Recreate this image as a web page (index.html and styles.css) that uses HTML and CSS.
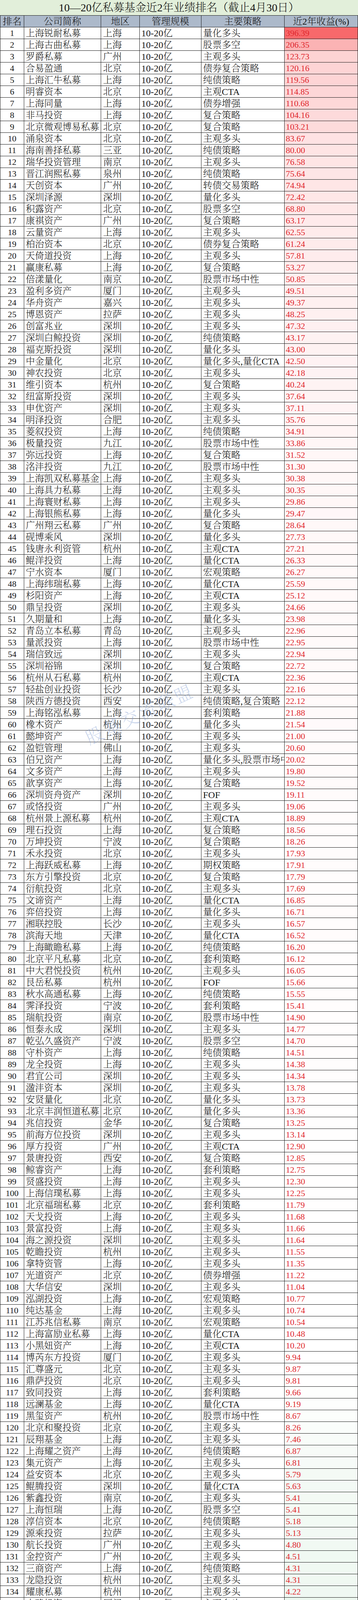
FILE: index.html
```html
<!DOCTYPE html>
<html lang="zh-CN">
<head>
<meta charset="utf-8">
<title>10—20亿私募基金近2年业绩排名</title>
<link rel="stylesheet" href="styles.css">
</head>
<body>
<div class="sheet">
<table class="rank-table">
<colgroup><col class="c-rk"><col class="c-nm"><col class="c-rg"><col class="c-sc"><col class="c-st"><col class="c-ret"></colgroup>
<thead>
<tr class="title-row"><th colspan="6">10—20亿私募基金近2年业绩排名（截止4月30日）</th></tr>
<tr class="head-row"><th>排名</th><th>公司简称</th><th>地区</th><th>管理规模</th><th>主要策略</th><th>近2年收益(%)</th></tr>
</thead>
<tbody>
<tr><td>1</td><td>上海锐耐私募</td><td>上海</td><td>10-20亿</td><td>量化多头</td><td class="up">396.39</td></tr>
<tr><td>2</td><td>上海古曲私募</td><td>上海</td><td>10-20亿</td><td>股票多空</td><td class="up">206.35</td></tr>
<tr><td>3</td><td>罗爵私募</td><td>广州</td><td>10-20亿</td><td>主观多头</td><td class="up">123.73</td></tr>
<tr><td>4</td><td>合易盈通</td><td>北京</td><td>10-20亿</td><td>债券复合策略</td><td class="up">120.16</td></tr>
<tr><td>5</td><td>上海汇牛私募</td><td>上海</td><td>10-20亿</td><td>纯债策略</td><td class="up">119.56</td></tr>
<tr><td>6</td><td>明睿资本</td><td>北京</td><td>10-20亿</td><td>主观CTA</td><td class="up">114.85</td></tr>
<tr><td>7</td><td>上海同量</td><td>上海</td><td>10-20亿</td><td>债券增强</td><td class="up">110.68</td></tr>
<tr><td>8</td><td>非马投资</td><td>上海</td><td>10-20亿</td><td>复合策略</td><td class="up">104.16</td></tr>
<tr><td>9</td><td>北京微观博易私募</td><td>北京</td><td>10-20亿</td><td>复合策略</td><td class="up">103.21</td></tr>
<tr><td>10</td><td>涌泉资本</td><td>北京</td><td>10-20亿</td><td>主观多头</td><td class="up">83.67</td></tr>
<tr><td>11</td><td>海南善择私募</td><td>三亚</td><td>10-20亿</td><td>纯债策略</td><td class="up">80.00</td></tr>
<tr><td>12</td><td>瑞华投资管理</td><td>南京</td><td>10-20亿</td><td>主观多头</td><td class="up">76.58</td></tr>
<tr><td>13</td><td>晋江润熙私募</td><td>泉州</td><td>10-20亿</td><td>纯债策略</td><td class="up">75.64</td></tr>
<tr><td>14</td><td>天创资本</td><td>广州</td><td>10-20亿</td><td>转债交易策略</td><td class="up">74.94</td></tr>
<tr><td>15</td><td>深圳泽源</td><td>深圳</td><td>10-20亿</td><td>量化多头</td><td class="up">72.42</td></tr>
<tr><td>16</td><td>积露资产</td><td>北京</td><td>10-20亿</td><td>股票多空</td><td class="up">68.80</td></tr>
<tr><td>17</td><td>康祺资产</td><td>广州</td><td>10-20亿</td><td>复合策略</td><td class="up">63.17</td></tr>
<tr><td>18</td><td>云量资产</td><td>上海</td><td>10-20亿</td><td>主观多头</td><td class="up">62.55</td></tr>
<tr><td>19</td><td>柏治资本</td><td>北京</td><td>10-20亿</td><td>债券复合策略</td><td class="up">61.24</td></tr>
<tr><td>20</td><td>天倚道投资</td><td>上海</td><td>10-20亿</td><td>主观多头</td><td class="up">57.81</td></tr>
<tr><td>21</td><td>赢康私募</td><td>上海</td><td>10-20亿</td><td>复合策略</td><td class="up">53.27</td></tr>
<tr><td>22</td><td>倍漾量化</td><td>南京</td><td>10-20亿</td><td>股票市场中性</td><td class="up">50.85</td></tr>
<tr><td>23</td><td>盈利多资产</td><td>厦门</td><td>10-20亿</td><td>主观多头</td><td class="up">49.51</td></tr>
<tr><td>24</td><td>华舟资产</td><td>嘉兴</td><td>10-20亿</td><td>主观多头</td><td class="up">49.37</td></tr>
<tr><td>25</td><td>博恩资产</td><td>拉萨</td><td>10-20亿</td><td>主观多头</td><td class="up">48.25</td></tr>
<tr><td>26</td><td>创富兆业</td><td>深圳</td><td>10-20亿</td><td>主观多头</td><td class="up">47.32</td></tr>
<tr><td>27</td><td>深圳白鲸投资</td><td>深圳</td><td>10-20亿</td><td>纯债策略</td><td class="up">43.17</td></tr>
<tr><td>28</td><td>福克斯投资</td><td>深圳</td><td>10-20亿</td><td>量化多头</td><td class="up">43.00</td></tr>
<tr><td>29</td><td>中金量化</td><td>北京</td><td>10-20亿</td><td>量化多头,量化CTA</td><td class="up">42.50</td></tr>
<tr><td>30</td><td>神农投资</td><td>北京</td><td>10-20亿</td><td>主观多头</td><td class="up">42.18</td></tr>
<tr><td>31</td><td>维引资本</td><td>杭州</td><td>10-20亿</td><td>复合策略</td><td class="up">40.24</td></tr>
<tr><td>32</td><td>纽富斯投资</td><td>深圳</td><td>10-20亿</td><td>主观多头</td><td class="up">37.64</td></tr>
<tr><td>33</td><td>申优资产</td><td>深圳</td><td>10-20亿</td><td>主观多头</td><td class="up">37.11</td></tr>
<tr><td>34</td><td>明泽投资</td><td>合肥</td><td>10-20亿</td><td>主观多头</td><td class="up">35.76</td></tr>
<tr><td>35</td><td>菱叙投资</td><td>上海</td><td>10-20亿</td><td>纯债策略</td><td class="up">34.91</td></tr>
<tr><td>36</td><td>极量投资</td><td>九江</td><td>10-20亿</td><td>股票市场中性</td><td class="up">33.86</td></tr>
<tr><td>37</td><td>弥远投资</td><td>上海</td><td>10-20亿</td><td>复合策略</td><td class="up">31.52</td></tr>
<tr><td>38</td><td>洺沣投资</td><td>九江</td><td>10-20亿</td><td>股票市场中性</td><td class="up">31.30</td></tr>
<tr><td>39</td><td>上海凯双私募基金</td><td>上海</td><td>10-20亿</td><td>主观多头</td><td class="up">30.38</td></tr>
<tr><td>40</td><td>上海具力私募</td><td>上海</td><td>10-20亿</td><td>主观多头</td><td class="up">30.35</td></tr>
<tr><td>41</td><td>上海寰财私募</td><td>上海</td><td>10-20亿</td><td>主观多头</td><td class="up">29.86</td></tr>
<tr><td>42</td><td>上海银熊私募</td><td>上海</td><td>10-20亿</td><td>量化多头</td><td class="up">29.47</td></tr>
<tr><td>43</td><td>广州翔云私募</td><td>广州</td><td>10-20亿</td><td>复合策略</td><td class="up">28.64</td></tr>
<tr><td>44</td><td>砚博乘风</td><td>深圳</td><td>10-20亿</td><td>量化多头</td><td class="up">27.73</td></tr>
<tr><td>45</td><td>钱唐永利资管</td><td>杭州</td><td>10-20亿</td><td>主观CTA</td><td class="up">27.21</td></tr>
<tr><td>46</td><td>鲲洋投资</td><td>上海</td><td>10-20亿</td><td>量化CTA</td><td class="up">26.33</td></tr>
<tr><td>47</td><td>宁水资本</td><td>厦门</td><td>10-20亿</td><td>宏观策略</td><td class="up">26.27</td></tr>
<tr><td>48</td><td>上海纬瑞私募</td><td>上海</td><td>10-20亿</td><td>量化CTA</td><td class="up">25.59</td></tr>
<tr><td>49</td><td>杉阳资产</td><td>上海</td><td>10-20亿</td><td>主观CTA</td><td class="up">25.12</td></tr>
<tr><td>50</td><td>鼎呈投资</td><td>深圳</td><td>10-20亿</td><td>主观多头</td><td class="up">24.66</td></tr>
<tr><td>51</td><td>久期量和</td><td>上海</td><td>10-20亿</td><td>量化多头</td><td class="up">23.98</td></tr>
<tr><td>52</td><td>青岛立本私募</td><td>青岛</td><td>10-20亿</td><td>主观多头</td><td class="up">22.96</td></tr>
<tr><td>53</td><td>量派投资</td><td>上海</td><td>10-20亿</td><td>股票市场中性</td><td class="up">22.95</td></tr>
<tr><td>54</td><td>瑞信致远</td><td>深圳</td><td>10-20亿</td><td>主观多头</td><td class="up">22.94</td></tr>
<tr><td>55</td><td>深圳裕锦</td><td>深圳</td><td>10-20亿</td><td>复合策略</td><td class="up">22.72</td></tr>
<tr><td>56</td><td>杭州从石私募</td><td>杭州</td><td>10-20亿</td><td>主观CTA</td><td class="up">22.36</td></tr>
<tr><td>57</td><td>轻盐创业投资</td><td>长沙</td><td>10-20亿</td><td>主观多头</td><td class="up">22.16</td></tr>
<tr><td>58</td><td>陕西方德投资</td><td>西安</td><td>10-20亿</td><td>纯债策略,复合策略</td><td class="up">22.12</td></tr>
<tr><td>59</td><td>上海铭泓私募</td><td>上海</td><td>10-20亿</td><td>套利策略</td><td class="up">21.88</td></tr>
<tr><td>60</td><td>橡木资产</td><td>杭州</td><td>10-20亿</td><td>量化多头</td><td class="up">21.54</td></tr>
<tr><td>61</td><td>懿坤资产</td><td>上海</td><td>10-20亿</td><td>主观多头</td><td class="up">21.00</td></tr>
<tr><td>62</td><td>盈铠管理</td><td>佛山</td><td>10-20亿</td><td>主观多头</td><td class="up">20.60</td></tr>
<tr><td>63</td><td>伯兄资产</td><td>上海</td><td>10-20亿</td><td>量化多头,股票市场中性</td><td class="up">20.02</td></tr>
<tr><td>64</td><td>文多资产</td><td>上海</td><td>10-20亿</td><td>主观多头</td><td class="up">19.80</td></tr>
<tr><td>65</td><td>歆享资产</td><td>上海</td><td>10-20亿</td><td>复合策略</td><td class="up">19.52</td></tr>
<tr><td>66</td><td>深圳资舟资产</td><td>深圳</td><td>10-20亿</td><td>FOF</td><td class="up">19.11</td></tr>
<tr><td>67</td><td>或恪投资</td><td>广州</td><td>10-20亿</td><td>主观多头</td><td class="up">19.06</td></tr>
<tr><td>68</td><td>杭州景上源私募</td><td>杭州</td><td>10-20亿</td><td>主观CTA</td><td class="up">18.89</td></tr>
<tr><td>69</td><td>理石投资</td><td>上海</td><td>10-20亿</td><td>复合策略</td><td class="up">18.56</td></tr>
<tr><td>70</td><td>万坤投资</td><td>宁波</td><td>10-20亿</td><td>复合策略</td><td class="up">18.26</td></tr>
<tr><td>71</td><td>禾永投资</td><td>北京</td><td>10-20亿</td><td>主观多头</td><td class="up">17.93</td></tr>
<tr><td>72</td><td>上海跃威私募</td><td>上海</td><td>10-20亿</td><td>期权策略</td><td class="up">17.91</td></tr>
<tr><td>73</td><td>东方引擎投资</td><td>北京</td><td>10-20亿</td><td>复合策略</td><td class="up">17.79</td></tr>
<tr><td>74</td><td>衍航投资</td><td>北京</td><td>10-20亿</td><td>主观多头</td><td class="up">17.69</td></tr>
<tr><td>75</td><td>文谛资产</td><td>上海</td><td>10-20亿</td><td>量化CTA</td><td class="up">16.85</td></tr>
<tr><td>76</td><td>弈倍投资</td><td>上海</td><td>10-20亿</td><td>量化多头</td><td class="up">16.71</td></tr>
<tr><td>77</td><td>湘联控股</td><td>长沙</td><td>10-20亿</td><td>主观多头</td><td class="up">16.57</td></tr>
<tr><td>78</td><td>滨海天地</td><td>天津</td><td>10-20亿</td><td>量化CTA</td><td class="up">16.52</td></tr>
<tr><td>79</td><td>上海瞰瞻私募</td><td>上海</td><td>10-20亿</td><td>纯债策略</td><td class="up">16.20</td></tr>
<tr><td>80</td><td>北京平凡私募</td><td>北京</td><td>10-20亿</td><td>套利策略</td><td class="up">16.12</td></tr>
<tr><td>81</td><td>中大君悦投资</td><td>杭州</td><td>10-20亿</td><td>主观多头</td><td class="up">16.05</td></tr>
<tr><td>82</td><td>艮岳私募</td><td>杭州</td><td>10-20亿</td><td>FOF</td><td class="up">15.66</td></tr>
<tr><td>83</td><td>秋水高通私募</td><td>上海</td><td>10-20亿</td><td>纯债策略</td><td class="up">15.55</td></tr>
<tr><td>84</td><td>霁泽投资</td><td>宁波</td><td>10-20亿</td><td>套利策略</td><td class="up">15.41</td></tr>
<tr><td>85</td><td>瑞航投资</td><td>南京</td><td>10-20亿</td><td>股票市场中性</td><td class="up">14.90</td></tr>
<tr><td>86</td><td>恒泰永成</td><td>深圳</td><td>10-20亿</td><td>主观多头</td><td class="up">14.77</td></tr>
<tr><td>87</td><td>乾弘久盛资产</td><td>宁波</td><td>10-20亿</td><td>股票多空</td><td class="up">14.70</td></tr>
<tr><td>88</td><td>守朴资产</td><td>上海</td><td>10-20亿</td><td>纯债策略</td><td class="up">14.51</td></tr>
<tr><td>89</td><td>龙全投资</td><td>上海</td><td>10-20亿</td><td>主观多头</td><td class="up">14.38</td></tr>
<tr><td>90</td><td>君宜公司</td><td>深圳</td><td>10-20亿</td><td>主观多头</td><td class="up">14.34</td></tr>
<tr><td>91</td><td>溋沣资本</td><td>深圳</td><td>10-20亿</td><td>主观多头</td><td class="up">13.78</td></tr>
<tr><td>92</td><td>安贤量化</td><td>北京</td><td>10-20亿</td><td>量化多头</td><td class="up">13.73</td></tr>
<tr><td>93</td><td>北京丰润恒道私募</td><td>北京</td><td>10-20亿</td><td>量化多头</td><td class="up">13.36</td></tr>
<tr><td>94</td><td>兆信投资</td><td>金华</td><td>10-20亿</td><td>复合策略</td><td class="up">13.25</td></tr>
<tr><td>95</td><td>前海方位投资</td><td>深圳</td><td>10-20亿</td><td>主观多头</td><td class="up">13.14</td></tr>
<tr><td>96</td><td>厚方投资</td><td>广州</td><td>10-20亿</td><td>主观CTA</td><td class="up">12.90</td></tr>
<tr><td>97</td><td>景唐投资</td><td>西安</td><td>10-20亿</td><td>复合策略</td><td class="up">12.85</td></tr>
<tr><td>98</td><td>鲸睿资产</td><td>上海</td><td>10-20亿</td><td>套利策略</td><td class="up">12.75</td></tr>
<tr><td>99</td><td>贤盛投资</td><td>上海</td><td>10-20亿</td><td>主观多头</td><td class="up">12.30</td></tr>
<tr><td>100</td><td>上海信璞私募</td><td>上海</td><td>10-20亿</td><td>主观多头</td><td class="up">12.25</td></tr>
<tr><td>101</td><td>北京福瑞私募</td><td>北京</td><td>10-20亿</td><td>套利策略</td><td class="up">11.79</td></tr>
<tr><td>102</td><td>天戈投资</td><td>上海</td><td>10-20亿</td><td>主观多头</td><td class="up">11.68</td></tr>
<tr><td>103</td><td>景富投资</td><td>上海</td><td>10-20亿</td><td>主观多头</td><td class="up">11.66</td></tr>
<tr><td>104</td><td>海之源投资</td><td>深圳</td><td>10-20亿</td><td>主观多头</td><td class="up">11.64</td></tr>
<tr><td>105</td><td>乾瞻投资</td><td>杭州</td><td>10-20亿</td><td>主观多头</td><td class="up">11.55</td></tr>
<tr><td>106</td><td>拿特资管</td><td>上海</td><td>10-20亿</td><td>主观多头</td><td class="up">11.35</td></tr>
<tr><td>107</td><td>光道资产</td><td>北京</td><td>10-20亿</td><td>债券增强</td><td class="up">11.22</td></tr>
<tr><td>108</td><td>大华信安</td><td>深圳</td><td>10-20亿</td><td>主观多头</td><td class="up">11.04</td></tr>
<tr><td>109</td><td>泓湖投资</td><td>上海</td><td>10-20亿</td><td>宏观策略</td><td class="up">10.77</td></tr>
<tr><td>110</td><td>纯达基金</td><td>上海</td><td>10-20亿</td><td>主观多头</td><td class="up">10.74</td></tr>
<tr><td>111</td><td>江苏兆信私募</td><td>南京</td><td>10-20亿</td><td>宏观策略</td><td class="up">10.54</td></tr>
<tr><td>112</td><td>上海富励业私募</td><td>上海</td><td>10-20亿</td><td>量化CTA</td><td class="up">10.48</td></tr>
<tr><td>113</td><td>小黑妞资产</td><td>上海</td><td>10-20亿</td><td>主观CTA</td><td class="up">10.20</td></tr>
<tr><td>114</td><td>博芮东方投资</td><td>厦门</td><td>10-20亿</td><td>主观多头</td><td class="up">9.94</td></tr>
<tr><td>115</td><td>汇尊盛元</td><td>北京</td><td>10-20亿</td><td>主观多头</td><td class="up">9.87</td></tr>
<tr><td>116</td><td>鼎萨投资</td><td>北京</td><td>10-20亿</td><td>主观多头</td><td class="up">9.81</td></tr>
<tr><td>117</td><td>致同投资</td><td>上海</td><td>10-20亿</td><td>套利策略</td><td class="up">9.66</td></tr>
<tr><td>118</td><td>远澜基金</td><td>上海</td><td>10-20亿</td><td>量化CTA</td><td class="up">9.19</td></tr>
<tr><td>119</td><td>黑玺资产</td><td>杭州</td><td>10-20亿</td><td>股票市场中性</td><td class="up">8.67</td></tr>
<tr><td>120</td><td>北京和聚投资</td><td>北京</td><td>10-20亿</td><td>主观多头</td><td class="up">8.26</td></tr>
<tr><td>121</td><td>辰翔基金</td><td>上海</td><td>10-20亿</td><td>主观多头</td><td class="up">7.46</td></tr>
<tr><td>122</td><td>上海耀之资产</td><td>上海</td><td>10-20亿</td><td>纯债策略</td><td class="up">6.87</td></tr>
<tr><td>123</td><td>集元资产</td><td>上海</td><td>10-20亿</td><td>主观多头</td><td class="up">6.81</td></tr>
<tr><td>124</td><td>益安资本</td><td>北京</td><td>10-20亿</td><td>主观多头</td><td class="up">5.79</td></tr>
<tr><td>125</td><td>鲲腾投资</td><td>深圳</td><td>10-20亿</td><td>量化CTA</td><td class="up">5.63</td></tr>
<tr><td>126</td><td>紫鑫投资</td><td>南京</td><td>10-20亿</td><td>主观多头</td><td class="up">5.41</td></tr>
<tr><td>127</td><td>上海恒瑞</td><td>上海</td><td>10-20亿</td><td>股票多空</td><td class="up">5.41</td></tr>
<tr><td>128</td><td>淳信资本</td><td>北京</td><td>10-20亿</td><td>纯债策略</td><td class="up">5.18</td></tr>
<tr><td>129</td><td>源乘投资</td><td>拉萨</td><td>10-20亿</td><td>主观多头</td><td class="up">5.13</td></tr>
<tr><td>130</td><td>航长投资</td><td>广州</td><td>10-20亿</td><td>主观多头</td><td class="up">4.80</td></tr>
<tr><td>131</td><td>金控资产</td><td>广州</td><td>10-20亿</td><td>主观多头</td><td class="up">4.51</td></tr>
<tr><td>132</td><td>三商资产</td><td>上海</td><td>10-20亿</td><td>纯债策略</td><td class="up">4.31</td></tr>
<tr><td>133</td><td>龙隐投资</td><td>杭州</td><td>10-20亿</td><td>主观多头</td><td class="up">4.31</td></tr>
<tr><td>134</td><td>耀康私募</td><td>杭州</td><td>10-20亿</td><td>主观多头</td><td class="up">4.22</td></tr>
<tr><td>135</td><td>中略投资</td><td>厦门</td><td>10-20亿</td><td>主观多头</td><td class="up">3.43</td></tr>
<tr><td>136</td><td>青岛洪运瑞恒私募</td><td>青岛</td><td>10-20亿</td><td>FOF</td><td class="up">3.20</td></tr>
<tr><td>137</td><td>向胤资产</td><td>杭州</td><td>10-20亿</td><td>FOF</td><td class="up">3.12</td></tr>
<tr><td>138</td><td>致遂投资</td><td>上海</td><td>10-20亿</td><td>纯债策略</td><td class="up">3.09</td></tr>
<tr><td>139</td><td>海浦投资</td><td>广州</td><td>10-20亿</td><td>主观多头</td><td class="up">2.54</td></tr>
<tr><td>140</td><td>长乐汇资本</td><td>珠海</td><td>10-20亿</td><td>主观多头</td><td class="up">1.71</td></tr>
<tr><td>141</td><td>优优财富</td><td>上海</td><td>10-20亿</td><td>主观多头</td><td class="up">1.02</td></tr>
<tr><td>142</td><td>乔戈里资本</td><td>北京</td><td>10-20亿</td><td>主观多头</td><td class="up">0.98</td></tr>
<tr><td>143</td><td>钦沐资产</td><td>上海</td><td>10-20亿</td><td>主观多头</td><td class="up">0.96</td></tr>
<tr><td>144</td><td>玉数投资</td><td>上海</td><td>10-20亿</td><td>股票市场中性</td><td class="up">0.94</td></tr>
<tr><td>145</td><td>创奥投资</td><td>上海</td><td>10-20亿</td><td>复合策略</td><td class="up">0.83</td></tr>
<tr><td>146</td><td>和熙投资</td><td>上海</td><td>10-20亿</td><td>主观多头</td><td class="up">0.60</td></tr>
<tr><td>147</td><td>方略资产</td><td>福州</td><td>10-20亿</td><td>主观多头</td><td class="up">0.42</td></tr>
<tr><td>148</td><td>金蟾蜍投资</td><td>杭州</td><td>10-20亿</td><td>主观多头</td><td class="up">0.42</td></tr>
<tr><td>149</td><td>杭州济海投资</td><td>杭州</td><td>10-20亿</td><td>纯债策略</td><td class="up">0.28</td></tr>
<tr><td>150</td><td>数字矩阵</td><td>北京</td><td>10-20亿</td><td>债券复合策略</td><td class="up">0.21</td></tr>
<tr><td>151</td><td>同兴共赢</td><td>北京</td><td>10-20亿</td><td>主观多头</td><td class="up">--</td></tr>
<tr><td>152</td><td>源铨投资</td><td>杭州</td><td>10-20亿</td><td>纯债策略</td><td class="dn">-0.03</td></tr>
<tr><td>153</td><td>璟恒投资</td><td>南京</td><td>10-20亿</td><td>主观多头</td><td class="dn">-0.09</td></tr>
<tr><td>154</td><td>天瓴投资</td><td>北京</td><td>10-20亿</td><td>FOF</td><td class="dn">-0.12</td></tr>
<tr><td>155</td><td>美阳投资</td><td>武汉</td><td>10-20亿</td><td>主观多头</td><td class="dn">-0.24</td></tr>
<tr><td>156</td><td>泓睿投资</td><td>上海</td><td>10-20亿</td><td>主观多头</td><td class="dn">-0.45</td></tr>
<tr><td>157</td><td>双隆投资</td><td>上海</td><td>10-20亿</td><td>量化CTA</td><td class="dn">-0.48</td></tr>
<tr><td>158</td><td>鑫然投资</td><td>深圳</td><td>10-20亿</td><td>主观多头</td><td class="dn">-0.70</td></tr>
<tr><td>159</td><td>国富投资</td><td>上海</td><td>10-20亿</td><td>量化多头</td><td class="dn">-1.14</td></tr>
<tr><td>160</td><td>超量子基金</td><td>深圳</td><td>10-20亿</td><td>量化多头</td><td class="dn">-1.51</td></tr>
<tr><td>161</td><td>期期投资(有限合伙)</td><td>上海</td><td>10-20亿</td><td>主观多头</td><td class="dn">-1.61</td></tr>
<tr><td>162</td><td>北京雪球私募</td><td>北京</td><td>10-20亿</td><td>FOF</td><td class="dn">-1.67</td></tr>
<tr><td>163</td><td>珏朔资产</td><td>上海</td><td>10-20亿</td><td>量化CTA</td><td class="dn">-2.25</td></tr>
<tr><td>164</td><td>社润投资</td><td>成都</td><td>10-20亿</td><td>主观多头</td><td class="dn">-2.43</td></tr>
<tr><td>165</td><td>爱凡哲投资</td><td>上海</td><td>10-20亿</td><td>量化CTA</td><td class="dn">-2.48</td></tr>
<tr><td>166</td><td>新湖巨源投资</td><td>北京</td><td>10-20亿</td><td>FOF</td><td class="dn">-2.64</td></tr>
<tr><td>167</td><td>固禾基金</td><td>深圳</td><td>10-20亿</td><td>主观CTA</td><td class="dn">-3.54</td></tr>
<tr><td>168</td><td>中融汇信投资</td><td>上海</td><td>10-20亿</td><td>FOF</td><td class="dn">-3.63</td></tr>
<tr><td>169</td><td>里思基金</td><td>广州</td><td>10-20亿</td><td>主观多头</td><td class="dn">-3.76</td></tr>
<tr><td>170</td><td>华道资本</td><td>北京</td><td>10-20亿</td><td>FOF</td><td class="dn">-3.92</td></tr>
<tr><td>171</td><td>锦成盛资产</td><td>杭州</td><td>10-20亿</td><td>宏观策略</td><td class="dn">-4.07</td></tr>
<tr><td>172</td><td>天井投资</td><td>上海</td><td>10-20亿</td><td>主观多头</td><td class="dn">-4.15</td></tr>
<tr><td>173</td><td>青岛以太</td><td>青岛</td><td>10-20亿</td><td>主观多头</td><td class="dn">-4.42</td></tr>
<tr><td>174</td><td>隆源投资</td><td>拉萨</td><td>10-20亿</td><td>股票多空</td><td class="dn">-4.70</td></tr>
<tr><td>175</td><td>新活力资本</td><td>拉萨</td><td>10-20亿</td><td>主观多头</td><td class="dn">-4.70</td></tr>
<tr><td>176</td><td>混沌道然资产</td><td>上海</td><td>10-20亿</td><td>主观多头</td><td class="dn">-4.99</td></tr>
<tr><td>177</td><td>宁聚投资</td><td>宁波</td><td>10-20亿</td><td>股票市场中性</td><td class="dn">-5.01</td></tr>
<tr><td>178</td><td>共青城壹维资产</td><td>九江</td><td>10-20亿</td><td>主观多头</td><td class="dn">-5.84</td></tr>
<tr><td>179</td><td>宁波泽添</td><td>宁波</td><td>10-20亿</td><td>主观多头</td><td class="dn">-5.90</td></tr>
<tr><td>180</td><td>博益安盈</td><td>深圳</td><td>10-20亿</td><td>股票市场中性</td><td class="dn">-5.99</td></tr>
<tr><td>181</td><td>域秀投资</td><td>上海</td><td>10-20亿</td><td>主观多头</td><td class="dn">-6.56</td></tr>
<tr><td>182</td><td>宏阳资本</td><td>宁波</td><td>10-20亿</td><td>主观多头</td><td class="dn">-7.68</td></tr>
<tr><td>183</td><td>紫金矿业资产</td><td>厦门</td><td>10-20亿</td><td>FOF</td><td class="dn">-8.35</td></tr>
<tr><td>184</td><td>三希资本</td><td>北京</td><td>10-20亿</td><td>主观多头</td><td class="dn">-8.59</td></tr>
<tr><td>185</td><td>领睿资产</td><td>北京</td><td>10-20亿</td><td>纯债策略</td><td class="dn">-8.62</td></tr>
<tr><td>186</td><td>久铭投资</td><td>上海</td><td>10-20亿</td><td>主观多头</td><td class="dn">-8.70</td></tr>
<tr><td>187</td><td>顺时投资</td><td>北京</td><td>10-20亿</td><td>纯债策略</td><td class="dn">-8.71</td></tr>
<tr><td>188</td><td>尚雅投资</td><td>上海</td><td>10-20亿</td><td>主观多头</td><td class="dn">-8.72</td></tr>
<tr><td>189</td><td>乾盛誉曦资产</td><td>上海</td><td>10-20亿</td><td>量化多头</td><td class="dn">-8.75</td></tr>
<tr><td>190</td><td>长富投资</td><td>上海</td><td>10-20亿</td><td>主观多头</td><td class="dn">-10.93</td></tr>
<tr><td>191</td><td>君禾投资</td><td>上海</td><td>10-20亿</td><td>主观多头</td><td class="dn">-11.42</td></tr>
<tr><td>192</td><td>无量资本</td><td>澄迈</td><td>10-20亿</td><td>量化多头</td><td class="dn">-11.86</td></tr>
<tr><td>193</td><td>循远资产</td><td>上海</td><td>10-20亿</td><td>主观多头</td><td class="dn">-12.08</td></tr>
<tr><td>194</td><td>骏泽投资</td><td>广州</td><td>10-20亿</td><td>主观多头</td><td class="dn">-12.73</td></tr>
<tr><td>195</td><td>沣沛投资</td><td>北京</td><td>10-20亿</td><td>主观多头</td><td class="dn">-12.87</td></tr>
<tr><td>196</td><td>世诚投资</td><td>上海</td><td>10-20亿</td><td>主观多头</td><td class="dn">-12.89</td></tr>
<tr><td>197</td><td>壁虎资本</td><td>杭州</td><td>10-20亿</td><td>主观多头</td><td class="dn">-13.08</td></tr>
<tr><td>198</td><td>华杉投资</td><td>深圳</td><td>10-20亿</td><td>主观多头</td><td class="dn">-13.13</td></tr>
<tr><td>199</td><td>浙江元葵资产</td><td>杭州</td><td>10-20亿</td><td>宏观策略</td><td class="dn">-13.30</td></tr>
<tr><td>200</td><td>惠丰资产</td><td>东莞</td><td>10-20亿</td><td>主观多头</td><td class="dn">-13.65</td></tr>
<tr><td>201</td><td>玄同量化</td><td>广州</td><td>10-20亿</td><td>量化多头</td><td class="dn">-14.35</td></tr>
<tr><td>202</td><td>裕晋投资</td><td>深圳</td><td>10-20亿</td><td>主观多头</td><td class="dn">-15.57</td></tr>
<tr><td>203</td><td>泊通投资</td><td>上海</td><td>10-20亿</td><td>宏观策略</td><td class="dn">-15.84</td></tr>
<tr><td>204</td><td>传家堡资管</td><td>北京</td><td>10-20亿</td><td>主观多头</td><td class="dn">-16.94</td></tr>
<tr><td>205</td><td>合信投资</td><td>杭州</td><td>10-20亿</td><td>纯债策略</td><td class="dn">-17.30</td></tr>
<tr><td>206</td><td>长金投资</td><td>拉萨</td><td>10-20亿</td><td>主观多头</td><td class="dn">-17.89</td></tr>
<tr><td>207</td><td>果实资本</td><td>三亚</td><td>10-20亿</td><td>主观多头</td><td class="dn">-18.68</td></tr>
<tr><td>208</td><td>拉曼资产</td><td>上海</td><td>10-20亿</td><td>债券复合策略</td><td class="dn">-19.35</td></tr>
<tr><td>209</td><td>民森投资</td><td>深圳</td><td>10-20亿</td><td>主观多头</td><td class="dn">-19.48</td></tr>
<tr><td>210</td><td>宁翼资产</td><td>上海</td><td>10-20亿</td><td>主观多头</td><td class="dn">-19.50</td></tr>
<tr><td>211</td><td>睿泉毅信投资</td><td>深圳</td><td>10-20亿</td><td>主观多头</td><td class="dn">-19.71</td></tr>
<tr><td>212</td><td>广州圆石投资</td><td>广州</td><td>10-20亿</td><td>主观多头</td><td class="dn">-19.74</td></tr>
<tr><td>213</td><td>惠理投资</td><td>上海</td><td>10-20亿</td><td>主观多头</td><td class="dn">-22.16</td></tr>
<tr><td>214</td><td>上海博鸿资产</td><td>上海</td><td>10-20亿</td><td>主观多头</td><td class="dn">-23.73</td></tr>
<tr><td>215</td><td>万利富达投资</td><td>深圳</td><td>10-20亿</td><td>主观多头</td><td class="dn">-24.04</td></tr>
<tr><td>216</td><td>景领投资</td><td>上海</td><td>10-20亿</td><td>主观多头</td><td class="dn">-24.30</td></tr>
<tr><td>217</td><td>鹰傲投资</td><td>广州</td><td>10-20亿</td><td>主观多头</td><td class="dn">-25.22</td></tr>
<tr><td>218</td><td>秋晟资产</td><td>上海</td><td>10-20亿</td><td>宏观策略</td><td class="dn">-25.41</td></tr>
<tr><td>219</td><td>龙航资产</td><td>宁波</td><td>10-20亿</td><td>主观多头</td><td class="dn">-27.53</td></tr>
<tr><td>220</td><td>海鹏投资</td><td>北京</td><td>10-20亿</td><td>主观CTA</td><td class="dn">-28.83</td></tr>
<tr><td>221</td><td>盛世知己投资</td><td>宁波</td><td>10-20亿</td><td>主观多头</td><td class="dn">-28.97</td></tr>
<tr><td>222</td><td>格雷资产</td><td>北京</td><td>10-20亿</td><td>主观多头</td><td class="dn">-30.03</td></tr>
<tr><td>223</td><td>博海汇金</td><td>杭州</td><td>10-20亿</td><td>主观多头</td><td class="dn">-31.27</td></tr>
<tr><td>224</td><td>留仁资产</td><td>上海</td><td>10-20亿</td><td>主观多头</td><td class="dn">-31.56</td></tr>
<tr><td>225</td><td>汇鑫投资</td><td>无锡</td><td>10-20亿</td><td>主观多头</td><td class="dn">-33.19</td></tr>
<tr><td>226</td><td>富恩德资产</td><td>北京</td><td>10-20亿</td><td>主观多头</td><td class="dn">-33.97</td></tr>
<tr><td>227</td><td>谢诺辰阳</td><td>广州</td><td>10-20亿</td><td>主观多头</td><td class="dn">-35.41</td></tr>
<tr><td>228</td><td>关天量化投资</td><td>西安</td><td>10-20亿</td><td>量化多头</td><td class="dn">-46.75</td></tr>
</tbody>
<tfoot>
<tr class="foot-row"><td colspan="6">股基交流联盟</td></tr>
</tfoot>
</table>
<span class="watermark">股基交流联盟</span>
</div>
<script src="script.js"></script>
</body>
</html>
```

FILE: styles.css
```css
html, body {
  margin: 0;
  padding: 0;
  background: #ffffff;
}

body {
  font-family: "Liberation Serif", "Noto Serif CJK SC", "Noto Sans CJK SC", serif;
  color: #141414;
}

.sheet {
  position: relative;
  width: 917px;
  overflow: hidden;
}

.rank-table {
  width: 917px;
  table-layout: fixed;
  border-collapse: separate;
  border-spacing: 0;
}

.c-rk { width: 62px; }
.c-nm { width: 197px; }
.c-rg { width: 99px; }
.c-sc { width: 158px; }
.c-st { width: 213px; }
.c-ret { width: 188px; }

.rank-table th,
.rank-table td {
  padding: 0;
  border-right: 1px solid #1c1c1c;
  border-bottom: 1px solid #1c1c1c;
  white-space: nowrap;
  overflow: hidden;
  font-size: 24px;
  line-height: 20px;
  font-weight: 300;
  text-align: left;
  vertical-align: middle;
}

.rank-table tr > :first-child {
  border-left: 1px solid #1c1c1c;
}

/* title */
.title-row {
  height: 40px;
}
.rank-table .title-row th {
  background: #e2efda;
  font-size: 28px;
  line-height: 24px;
  text-align: center;
  border-left: none;
  border-right: none;
  font-weight: 300;
}

/* header */
.head-row {
  height: 30px;
}
.rank-table .head-row th {
  background: #acb9ca;
  text-align: center;
  font-weight: 300;
}

/* body rows */
.rank-table tbody tr {
  height: 30px;
}
.rank-table tbody td:nth-child(1) {
  text-align: center;
  font-size: 22px;
}
.rank-table tbody td:nth-child(2) {
  padding-left: 4px;
  font-size: 23.5px;
}
.rank-table tbody td:nth-child(3) {
  padding-left: 5px;
}
.rank-table tbody td:nth-child(4),
.rank-table tbody td:nth-child(5) {
  padding-left: 4px;
}
.rank-table tbody td:nth-child(6) {
  padding-left: 3px;
  font-size: 22px;
}
.rank-table td.up {
  color: #e0282e;
}
.rank-table td.dn {
  color: #34ad52;
}

/* footer */
.foot-row {
  height: 43px;
}
.rank-table .foot-row td {
  background: #d6dce4;
  text-align: center;
  font-size: 31px;
  line-height: 26px;
  border-bottom: none;
}

/* watermark */
.watermark {
  position: absolute;
  left: 206px;
  top: 1798px;
  font-family: "Noto Serif CJK SC", "Noto Sans CJK SC", sans-serif;
  font-size: 46px;
  font-weight: 300;
  letter-spacing: 4px;
  line-height: 56px;
  color: rgba(120, 150, 205, 0.38);
  transform: rotate(-25deg);
  transform-origin: center center;
  pointer-events: none;
  white-space: nowrap;
}
```

FILE: script.js
```js
(function () {
  var cells = Array.prototype.slice.call(
    document.querySelectorAll('.rank-table tbody td:nth-child(6)')
  );
  var vals = [];
  cells.forEach(function (c) {
    var v = parseFloat(c.textContent);
    if (!isNaN(v)) vals.push(v);
  });
  var s = vals.slice().sort(function (a, b) { return a - b; });
  var n = s.length;
  var pos = (n - 1) * 0.5;
  var lo = Math.floor(pos);
  var hi = Math.ceil(pos);
  var mid = s[lo] + (s[hi] - s[lo]) * (pos - lo);
  var min = s[0];
  var max = s[n - 1];
  function mix(a, b, t) { return Math.round(a + (b - a) * t); }
  cells.forEach(function (c) {
    var v = parseFloat(c.textContent);
    if (isNaN(v)) return;
    var rgb;
    if (v >= mid) {
      var t = (v - mid) / (max - mid);
      rgb = [mix(255, 248, t), mix(255, 105, t), mix(255, 107, t)];
    } else {
      var u = (mid - v) / (mid - min);
      rgb = [mix(255, 99, u), mix(255, 190, u), mix(255, 123, u)];
    }
    c.style.backgroundColor = 'rgb(' + rgb.join(',') + ')';
  });
})();
```
